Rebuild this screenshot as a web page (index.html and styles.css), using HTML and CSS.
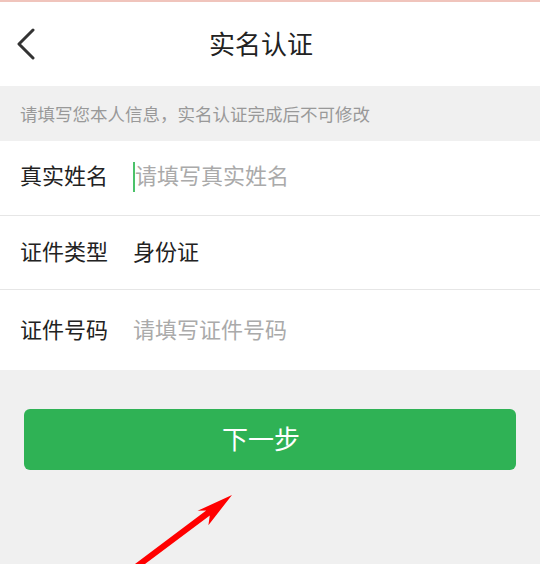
FILE: index.html
```html
<!doctype html>
<html lang="zh-CN">
  <head>
    <meta charset="UTF-8" />
    <meta name="viewport" content="width=device-width, initial-scale=1.0" />
    <title>实名认证</title>
    <link rel="stylesheet" href="styles.css">
  </head>
  <body>
    <div class="page">
      <div class="status-line"></div>

      <header class="nav">
        <a class="back" href="#">
          <svg width="20" height="32" viewBox="0 0 20 32">
            <polyline points="17,2 3,16 17,30" fill="none" stroke="#333" stroke-width="3" stroke-linecap="round" stroke-linejoin="round" />
          </svg>
        </a>
        <h1>实名认证</h1>
        <span></span>
      </header>

      <p class="tip">请填写您本人信息，实名认证完成后不可修改</p>

      <form class="form">
        <div class="row row-first">
          <label for="realName">真实姓名</label>
          <span class="cursor"></span>
          <input id="realName" type="text" placeholder="请填写真实姓名" />
        </div>
        <div class="row">
          <label>证件类型</label>
          <span class="value">身份证</span>
        </div>
        <div class="row row-last">
          <label for="idNo">证件号码</label>
          <input id="idNo" type="text" placeholder="请填写证件号码" />
        </div>
      </form>

      <div class="actions">
        <button type="button" class="next">下一步</button>
      </div>

      <!-- red pointer drawn over the page -->
      <svg class="pointer" width="540" height="564" viewBox="0 0 540 564">
        <polygon fill="#ff0000" points="232,495 197.6,510.8 206.2,510.6 126.2,570.6 129.8,575.4 209.8,515.4 208.4,525.2" />
      </svg>
    </div>
  </body>
</html>
```

FILE: styles.css
```css
* {
  box-sizing: border-box;
}
body {
  margin: 0;
  background: #f0f0f0;
  font-family: "Noto Sans CJK SC", "Noto Sans", sans-serif;
  color: #222;
}
.page {
  position: relative;
  height: 564px;
  overflow: hidden;
}
.status-line {
  height: 2px;
  background: #f0c4bc;
}
.nav {
  display: grid;
  grid-template-columns: 42px 1fr 60px;
  align-items: center;
  height: 84px;
  padding-bottom: 4px;
  background: #fff;
}
.back {
  display: flex;
  padding-left: 16px;
  padding-top: 4px;
}
.nav h1 {
  margin: 0;
  text-align: center;
  font-size: 26px;
  font-weight: normal;
  color: #222;
}
.tip {
  margin: 0;
  height: 55px;
  padding-left: 20px;
  display: flex;
  align-items: center;
  font-size: 17.5px;
  color: #999;
}
.form {
  background: #fff;
}
.row {
  display: flex;
  align-items: center;
  height: 74px;
  padding-left: 20px;
  padding-bottom: 6px;
  border-bottom: 1px solid #e6e6e6;
}
.row-first {
  height: 75px;
  padding-bottom: 8px;
}
.row-last {
  height: 80px;
  padding-bottom: 5px;
  border-bottom: none;
}
.row label {
  width: 113px;
  font-size: 22px;
  color: #222;
}
.row input {
  flex: 1;
  border: none;
  outline: none;
  padding: 0;
  font-family: inherit;
  font-size: 22px;
  color: #222;
  background: transparent;
}
.row input::placeholder {
  color: #aaa;
}
.cursor {
  width: 2px;
  height: 30px;
  margin-top: 6px;
  background: #4cc26a;
}
.value {
  font-size: 22px;
  color: #222;
}
.actions {
  padding: 39px 24px 0;
}
.next {
  display: block;
  width: 100%;
  height: 61px;
  padding: 0 18px 4px 0;
  border: none;
  border-radius: 6px;
  background: #2fb255;
  color: #fff;
  font-family: inherit;
  font-size: 26px;
  cursor: pointer;
}
.pointer {
  position: absolute;
  left: 0;
  top: 0;
  pointer-events: none;
}
```
